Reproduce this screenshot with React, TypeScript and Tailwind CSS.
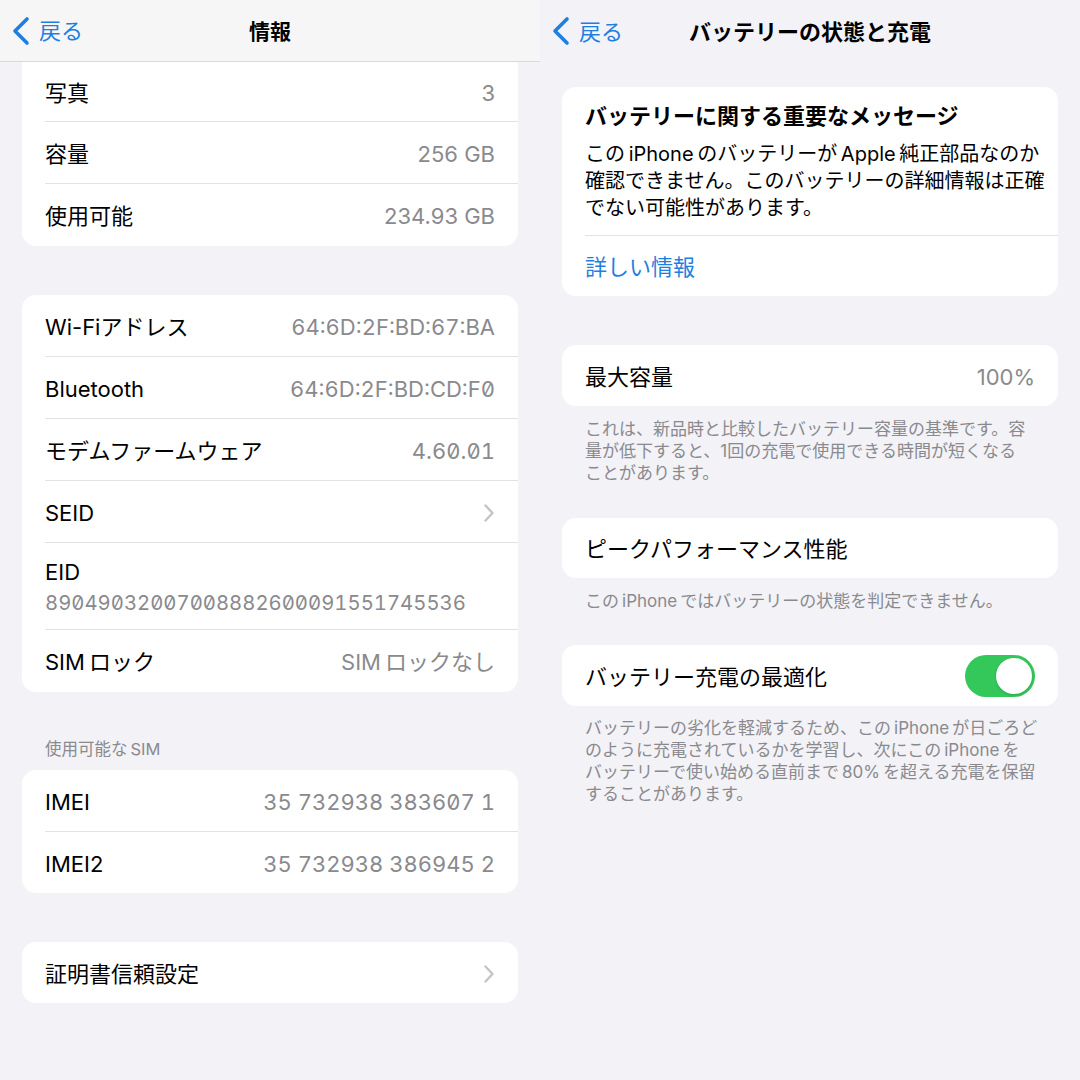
import type { ReactNode } from 'react';

const font = "font-['Inter','Noto_Sans_CJK_JP',sans-serif]";
const thin = '\u2009';

function BackChevron() {
  return (
    <svg width="20" height="30" viewBox="0 0 20 30" fill="none">
      <path d="M16 3 L4 15 L16 27" stroke="#1f7fe0" strokeWidth="3.6" strokeLinecap="round" strokeLinejoin="round" />
    </svg>
  );
}

function Chevron() {
  return (
    <svg width="12" height="20" viewBox="0 0 12 20" fill="none">
      <path d="M2.5 2.5 L9.5 10 L2.5 17.5" stroke="#c4c4c8" strokeWidth="2.4" strokeLinecap="round" strokeLinejoin="round" />
    </svg>
  );
}

function NavBar({ title, tinted }: { title: string; tinted?: boolean }) {
  return (
    <header
      className={`grid h-[62px] grid-cols-[1fr_auto_1fr] items-center ${
        tinted ? 'border-b border-[#d9d9dc] bg-[#f6f6f6]' : ''
      }`}
    >
      <div className="flex items-center gap-[8px] pl-[11px] text-[22px] text-[#1f7fe0]">
        <BackChevron />
        <span className="pt-[2px]">戻る</span>
      </div>
      <h1 className={`pt-[2px] font-bold text-black ${tinted ? 'text-[21px]' : 'text-[22px]'}`}>{title}</h1>
      <div />
    </header>
  );
}

interface RowProps {
  label: string;
  value?: string;
  numeric?: boolean;
  chevron?: boolean;
  last?: boolean;
  height?: string;
}

function Row({ label, value, numeric, chevron, last, height = 'h-[62px]' }: RowProps) {
  return (
    <div className="pl-[23px]">
      <div
        className={`flex items-center justify-between pt-[3px] pr-[23px] ${height} ${
          last ? '' : 'border-b border-[#e2e2e5]'
        }`}
      >
        <span className="text-[22px] text-black">{label}</span>
        {value && (
          <span
            className={`text-[22px] text-[#8a8a8e] ${numeric ? 'slashed-zero tabular-nums' : ''}`}
          >
            {value}
          </span>
        )}
        {chevron && <Chevron />}
      </div>
    </div>
  );
}

function Card({ children, className = '' }: { children: ReactNode; className?: string }) {
  return <section className={`mx-[22px] overflow-hidden rounded-[14px] bg-white ${className}`}>{children}</section>;
}

function Footer({ lines, className = '' }: { lines: string[]; className?: string }) {
  return (
    <div className={`px-[45px] text-[17px] leading-[22px] text-[#8a8a8e] ${className}`}>
      {lines.map((l) => (
        <p key={l} className="whitespace-nowrap">
          {l}
        </p>
      ))}
    </div>
  );
}

function AboutPane() {
  return (
    <div className="h-full bg-[#f2f2f7]">
      <NavBar title="情報" tinted />
      <Card className="rounded-t-none">
        <Row label="写真" value="3" height="h-[60px]" />
        <Row label="容量" value="256 GB" />
        <Row label="使用可能" value="234.93 GB" last />
      </Card>

      <Card className="mt-[49px]">
        <Row label="Wi-Fiアドレス" value="64:6D:2F:BD:67:BA" numeric />
        <Row label="Bluetooth" value="64:6D:2F:BD:CD:F0" numeric />
        <Row label="モデムファームウェア" value="4.60.01" numeric />
        <Row label="SEID" chevron />
        <div className="pl-[23px]">
          <div className="flex h-[87px] flex-col justify-center border-b border-[#e2e2e5] pt-[2px] pr-[23px]">
            <span className="text-[22px] leading-[30px] text-black">EID</span>
            <span className="text-[20.3px] leading-[31px] text-[#8a8a8e] slashed-zero tabular-nums">
              89049032007008882600091551745536
            </span>
          </div>
        </div>
        <Row label={`SIM${thin}ロック`} value={`SIM${thin}ロックなし`} last />
      </Card>

      <p className="mt-[47px] mb-[11px] px-[45px] text-[16.5px] leading-[20px] text-[#8a8a8e]">
        使用可能な{thin}SIM
      </p>
      <Card>
        <Row label="IMEI" value="35 732938 383607 1" numeric />
        <Row label="IMEI2" value="35 732938 386945 2" numeric last height="h-[61px]" />
      </Card>

      <Card className="mt-[49px]">
        <Row label="証明書信頼設定" chevron last height="h-[61px]" />
      </Card>
    </div>
  );
}

function Toggle() {
  return (
    <div className="flex h-[42px] w-[70px] items-center justify-end rounded-full bg-[#34c759] p-[3px]">
      <div className="h-[36px] w-[36px] rounded-full bg-white shadow-[0_1px_3px_rgba(0,0,0,0.15)]" />
    </div>
  );
}

function BatteryPane() {
  return (
    <div className="h-full bg-[#f2f2f7]">
      <NavBar title="バッテリーの状態と充電" />

      <Card className="mt-[25px]">
        <div className="px-[23px] pt-[15px]">
          <h2 className="text-[22px] leading-[28px] font-bold text-black">バッテリーに関する重要なメッセージ</h2>
          <div className="mt-[11px] pb-[13px] text-[20px] leading-[27px] text-black">
            <p className="whitespace-nowrap">この{thin}iPhone{thin}のバッテリーが{thin}Apple{thin}純正部品なのか</p>
            <p className="whitespace-nowrap">確認できません。このバッテリーの詳細情報は正確</p>
            <p className="whitespace-nowrap">でない可能性があります。</p>
          </div>
        </div>
        <div className="ml-[23px] border-t border-[#e2e2e5]" />
        <div className="flex h-[60px] items-center px-[23px] pt-[3px] text-[22px] text-[#1f7fe0]">詳しい情報</div>
      </Card>

      <Card className="mt-[49px]">
        <Row label="最大容量" value="100%" last height="h-[61px]" />
      </Card>
      <Footer
        className="mt-[12px]"
        lines={[
          'これは、新品時と比較したバッテリー容量の基準です。容',
          '量が低下すると、1回の充電で使用できる時間が短くなる',
          'ことがあります。',
        ]}
      />

      <Card className="mt-[34px]">
        <Row label="ピークパフォーマンス性能" last height="h-[60px]" />
      </Card>
      <Footer className="mt-[12px]" lines={[`この${thin}iPhone${thin}ではバッテリーの状態を判定できません。`]} />

      <Card className="mt-[33px]">
        <div className="flex h-[61px] items-center justify-between px-[23px]">
          <span className="pt-[3px] text-[22px] text-black">バッテリー充電の最適化</span>
          <Toggle />
        </div>
      </Card>
      <Footer
        className="mt-[11px]"
        lines={[
          `バッテリーの劣化を軽減するため、この${thin}iPhone${thin}が日ごろど`,
          `のように充電されているかを学習し、次にこの${thin}iPhone${thin}を`,
          `バッテリーで使い始める直前まで${thin}80%${thin}を超える充電を保留`,
          'することがあります。',
        ]}
      />
    </div>
  );
}

export default function App() {
  return (
    <div className={`flex h-[1080px] w-[1080px] overflow-hidden bg-[#f2f2f7] ${font}`}>
      <div className="h-full w-[540px]">
        <AboutPane />
      </div>
      <div className="h-full w-[540px]">
        <BatteryPane />
      </div>
    </div>
  );
}
